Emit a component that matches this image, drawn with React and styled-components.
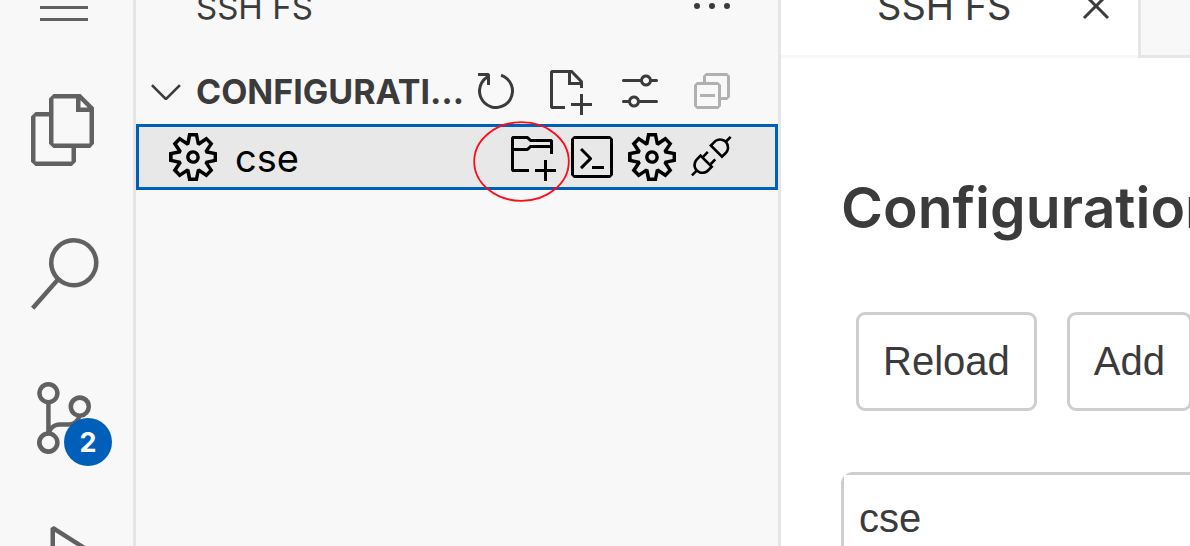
import React from 'react';
import styled, { createGlobalStyle } from 'styled-components';
import {
  VscMenu, VscFiles, VscSearch, VscSourceControl, VscDebugAlt, VscEllipsis, VscChevronDown,
  VscRefresh, VscNewFile, VscSettings, VscCollapseAll, VscSettingsGear, VscNewFolder,
  VscTerminal, VscDebugDisconnect, VscClose,
} from 'react-icons/vsc';

const UI_FONT = '"Inter", "Liberation Sans", sans-serif';
const FORM_FONT = '"Liberation Sans", Arial, sans-serif';
const LINE = '#e5e5e5';
const TEXT = '#3b3b3b';
const BLUE = '#005fb8';

const GlobalStyle = createGlobalStyle`
  * { box-sizing: border-box; }
  body { margin: 0; overflow: hidden; background: #fff; font-family: ${UI_FONT}; color: ${TEXT}; }
`;

const Shell = styled.div`
  display: flex;
  height: calc(100vh + 47px);
  margin-top: -47px;
`;

const IconButton = styled.button`
  display: flex;
  align-items: center;
  justify-content: center;
  flex: none;
  padding: 0;
  border: 0;
  background: none;
  color: ${(p) => p.$color || 'inherit'};
  font-size: ${(p) => p.$size || 48}px;
`;

const ActivityBar = styled.nav`
  display: flex;
  flex-direction: column;
  flex: none;
  width: 136px;
  padding-right: 5px;
  border-right: 3px solid ${LINE};
  background: #f8f8f8;
  color: #616161;
  overflow: hidden;
`;

const MenuButton = styled(IconButton)`
  height: 105px;
`;

const ActivityItem = styled(IconButton)`
  position: relative;
  height: 144px;
`;

const Badge = styled.span`
  position: absolute;
  right: 16px;
  bottom: 24px;
  width: 48px;
  height: 48px;
  border-radius: 50%;
  background: ${BLUE};
  color: #fff;
  font: 700 27px/50px ${UI_FONT};
  text-align: center;
`;

const SideBar = styled.aside`
  flex: none;
  width: 645px;
  border-right: 3px solid ${LINE};
  background: #f8f8f8;
`;

const SideTitle = styled.header`
  display: flex;
  align-items: center;
  justify-content: space-between;
  height: 105px;
  padding: 0 42px 0 60px;
`;

const SideHeading = styled.h2`
  margin: 0;
  padding-top: 2px;
  font-size: 33px;
  line-height: 48px;
  font-weight: 400;
`;

const SectionHeader = styled.div`
  display: flex;
  align-items: center;
  height: 66px;
  padding: 0 42px 0 6px;
`;

const SectionTitle = styled.h3`
  flex: 1;
  min-width: 0;
  margin: 0 3px 0 6px;
  padding-top: 2px;
  overflow: hidden;
  text-overflow: ellipsis;
  white-space: nowrap;
  font-size: 34px;
  line-height: 48px;
  font-weight: 700;
`;

const Actions = styled.div`
  display: flex;
  gap: ${(p) => p.$gap}px;
`;

const TreeRow = styled.div`
  position: relative;
  display: flex;
  align-items: center;
  height: 66px;
  padding: 0 39px 0 30px;
  border: 3px solid ${BLUE};
  background: #e8e8e8;
  color: #000;
  font-size: 48px;
`;

const RowLabel = styled.span`
  flex: 1;
  padding: 2px 0 0 18px;
  font-size: 38px;
  line-height: 58px;
`;

const Highlight = styled.svg`
  position: absolute;
  top: -7px;
  right: 204px;
  width: 98px;
  height: 82px;
  pointer-events: none;
`;

const Editor = styled.main`
  flex: 1;
  min-width: 0;
  overflow: hidden;
  background: #fff;
`;

const TabStrip = styled.div`
  display: flex;
  height: 105px;
`;

const Tab = styled.div`
  display: flex;
  align-items: center;
  justify-content: space-between;
  flex: none;
  width: 360px;
  padding: 0 18px 0 96px;
  border-right: 3px solid ${LINE};
  background: linear-gradient(#f8f8f8, #f8f8f8) bottom / 100% 3px no-repeat #fff;
  font-size: 38px;
  line-height: 60px;
`;

const TabFiller = styled.div`
  flex: 1;
  border-bottom: 3px solid ${LINE};
  background: #f8f8f8;
`;

const Page = styled.div`
  padding: 114px 0 0 60px;
`;

const PageTitle = styled.h1`
  margin: 0;
  white-space: nowrap;
  font-size: 57px;
  line-height: 72px;
  font-weight: 600;
`;

const ButtonRow = styled.div`
  display: flex;
  gap: 30px;
  padding: 68px 0 61px 15px;
`;

const FormButton = styled.button`
  flex: none;
  height: 99px;
  padding: 0 24px 2px;
  border: 3px solid #cecece;
  border-radius: 9px;
  background: #fff;
  color: ${TEXT};
  font: 400 40px/48px ${FORM_FONT};
`;

const ConfigList = styled.ul`
  margin: 0;
  padding: 0;
  border: 3px solid #cecece;
  border-right: 0;
  border-radius: 12px 0 0 12px;
  list-style: none;
`;

const ConfigItem = styled.li`
  padding: 0 15px;
  background: #fff;
  font: 400 40px/86px ${FORM_FONT};
`;

export default function App() {
  return (
    <>
      <GlobalStyle />
      <Shell>
        <ActivityBar>
          <MenuButton $size={48} aria-label="Menu"><VscMenu /></MenuButton>
          <ActivityItem $size={72} aria-label="Explorer"><VscFiles /></ActivityItem>
          <ActivityItem $size={72} aria-label="Search"><VscSearch /></ActivityItem>
          <ActivityItem $size={72} aria-label="Source control">
            <VscSourceControl />
            <Badge>2</Badge>
          </ActivityItem>
          <ActivityItem $size={72} aria-label="Run and debug"><VscDebugAlt /></ActivityItem>
        </ActivityBar>

        <SideBar>
          <SideTitle>
            <SideHeading>SSH FS</SideHeading>
            <IconButton aria-label="More actions"><VscEllipsis /></IconButton>
          </SideTitle>
          <SectionHeader>
            <IconButton aria-label="Collapse section"><VscChevronDown /></IconButton>
            <SectionTitle>CONFIGURATIONS</SectionTitle>
            <Actions $gap={24}>
              <IconButton aria-label="Refresh"><VscRefresh /></IconButton>
              <IconButton aria-label="New configuration"><VscNewFile /></IconButton>
              <IconButton aria-label="Settings"><VscSettings /></IconButton>
              <IconButton aria-label="Collapse all" $color="#b0b0b0"><VscCollapseAll /></IconButton>
            </Actions>
          </SectionHeader>
          <TreeRow>
            <VscSettingsGear />
            <RowLabel>cse</RowLabel>
            <Actions $gap={12}>
              <IconButton aria-label="Add workspace folder"><VscNewFolder /></IconButton>
              <IconButton aria-label="Open terminal"><VscTerminal /></IconButton>
              <IconButton aria-label="Configure"><VscSettingsGear /></IconButton>
              <IconButton aria-label="Disconnect"><VscDebugDisconnect /></IconButton>
            </Actions>
            <Highlight viewBox="0 0 98 82">
              <ellipse cx="48.5" cy="41.5" rx="47.3" ry="39.3" fill="none" stroke="#fc0d1b" strokeWidth="1.8" />
            </Highlight>
          </TreeRow>
        </SideBar>

        <Editor>
          <TabStrip>
            <Tab>
              SSH FS
              <IconButton aria-label="Close tab"><VscClose /></IconButton>
            </Tab>
            <TabFiller />
          </TabStrip>
          <Page>
            <PageTitle>Configurations</PageTitle>
            <ButtonRow>
              <FormButton>Reload</FormButton>
              <FormButton>Add</FormButton>
            </ButtonRow>
            <ConfigList>
              <ConfigItem>cse</ConfigItem>
            </ConfigList>
          </Page>
        </Editor>
      </Shell>
    </>
  );
}
